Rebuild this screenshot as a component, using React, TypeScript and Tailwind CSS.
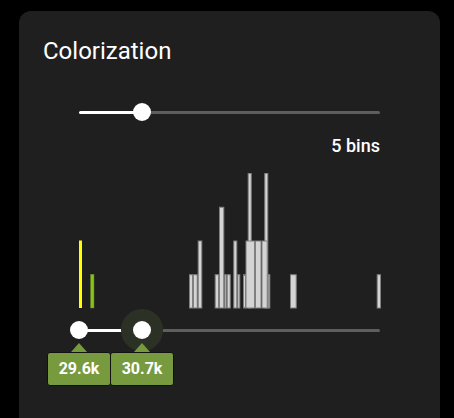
const BASE = 148;
const UNIT = 33.75;
const LEFT = 79;

const grayBars: [number, number, number][] = [
  [247.7, 251.7, 4],
  [264.3, 268.3, 4],
  [219, 224.3, 3],
  [189, 193, 1],
  [193, 197.7, 1],
  [197.7, 202.3, 2],
  [214.7, 219, 1],
  [224.3, 226.7, 1],
  [226.7, 230.7, 1],
  [233.3, 237.3, 2],
  [237.3, 240.3, 1],
  [243, 246, 1],
  [245.5, 255, 2],
  [255, 261.5, 2],
  [261.5, 267.7, 2],
  [267.7, 270.3, 1],
  [290, 296.7, 1],
  [376.7, 381, 1],
];

function Histogram() {
  return (
    <svg width={301} height={BASE} className="block overflow-visible">
      <rect x={79 - LEFT} y={BASE - 2 * UNIT} width={3} height={2 * UNIT} fill="#ffff00" />
      <rect x={90.5 - LEFT} y={BASE - UNIT} width={3.5} height={UNIT} fill="#86c21c" stroke="#5d7d22" strokeWidth={0.5} />
      {grayBars.map(([a, b, h], i) => (
        <rect
          key={i}
          x={a - LEFT + 0.5}
          y={BASE - h * UNIT + 0.5}
          width={b - a - 1}
          height={h * UNIT - 0.5}
          fill="#d4d4d4"
          stroke="#808080"
          strokeWidth={1}
        />
      ))}
    </svg>
  );
}

function Thumb({ label, active }: { label?: string; active?: boolean }) {
  return (
    <div
      className={`relative shrink-0 -mx-[9px] z-10 w-[18px] h-[18px] rounded-full bg-white ${
        active ? 'shadow-[0_0_0_12px_#2c3125]' : ''
      }`}
    >
      {label && (
        <div className="absolute top-[22px] left-1/2 -translate-x-1/2 z-20 flex flex-col items-center">
          <div className="w-0 h-0 border-x-[8px] border-x-transparent border-b-[9px] border-b-[#789a3f]" />
          <div className="w-[64px] h-[34px] flex items-center justify-center rounded-[3px] border border-[#111] bg-[#789a3f] text-white text-base font-bold">
            {label}
          </div>
        </div>
      )}
    </div>
  );
}

export default function App() {
  return (
    <div className="min-h-screen bg-black pt-[11px] pl-[19px] overflow-hidden" style={{ fontFamily: 'Roboto, "Liberation Sans", sans-serif' }}>
      <div className="w-[421px] h-[440px] rounded-xl bg-[#1f1f1f] pt-6 px-6">
        <h2 className="text-2xl leading-8 text-white">Colorization</h2>

        <div className="mx-9">
          {/* bins slider */}
          <div className="flex items-center h-5 mt-[35px]">
            <div className="w-[63px] h-[3px] rounded-l-full bg-white" />
            <Thumb />
            <div className="flex-1 h-[3px] rounded-r-full bg-[#5e5e5e]" />
          </div>
          <div className="mt-[10px] text-right text-lg leading-7 font-medium text-white">5 bins</div>

          <Histogram />

          {/* range slider */}
          <div className="flex items-center h-5 mt-3">
            <Thumb label="29.6k" />
            <div className="w-[63px] h-[3px] bg-white" />
            <Thumb label="30.7k" active />
            <div className="flex-1 h-[3px] rounded-r-full bg-[#5e5e5e]" />
          </div>
        </div>
      </div>
    </div>
  );
}
